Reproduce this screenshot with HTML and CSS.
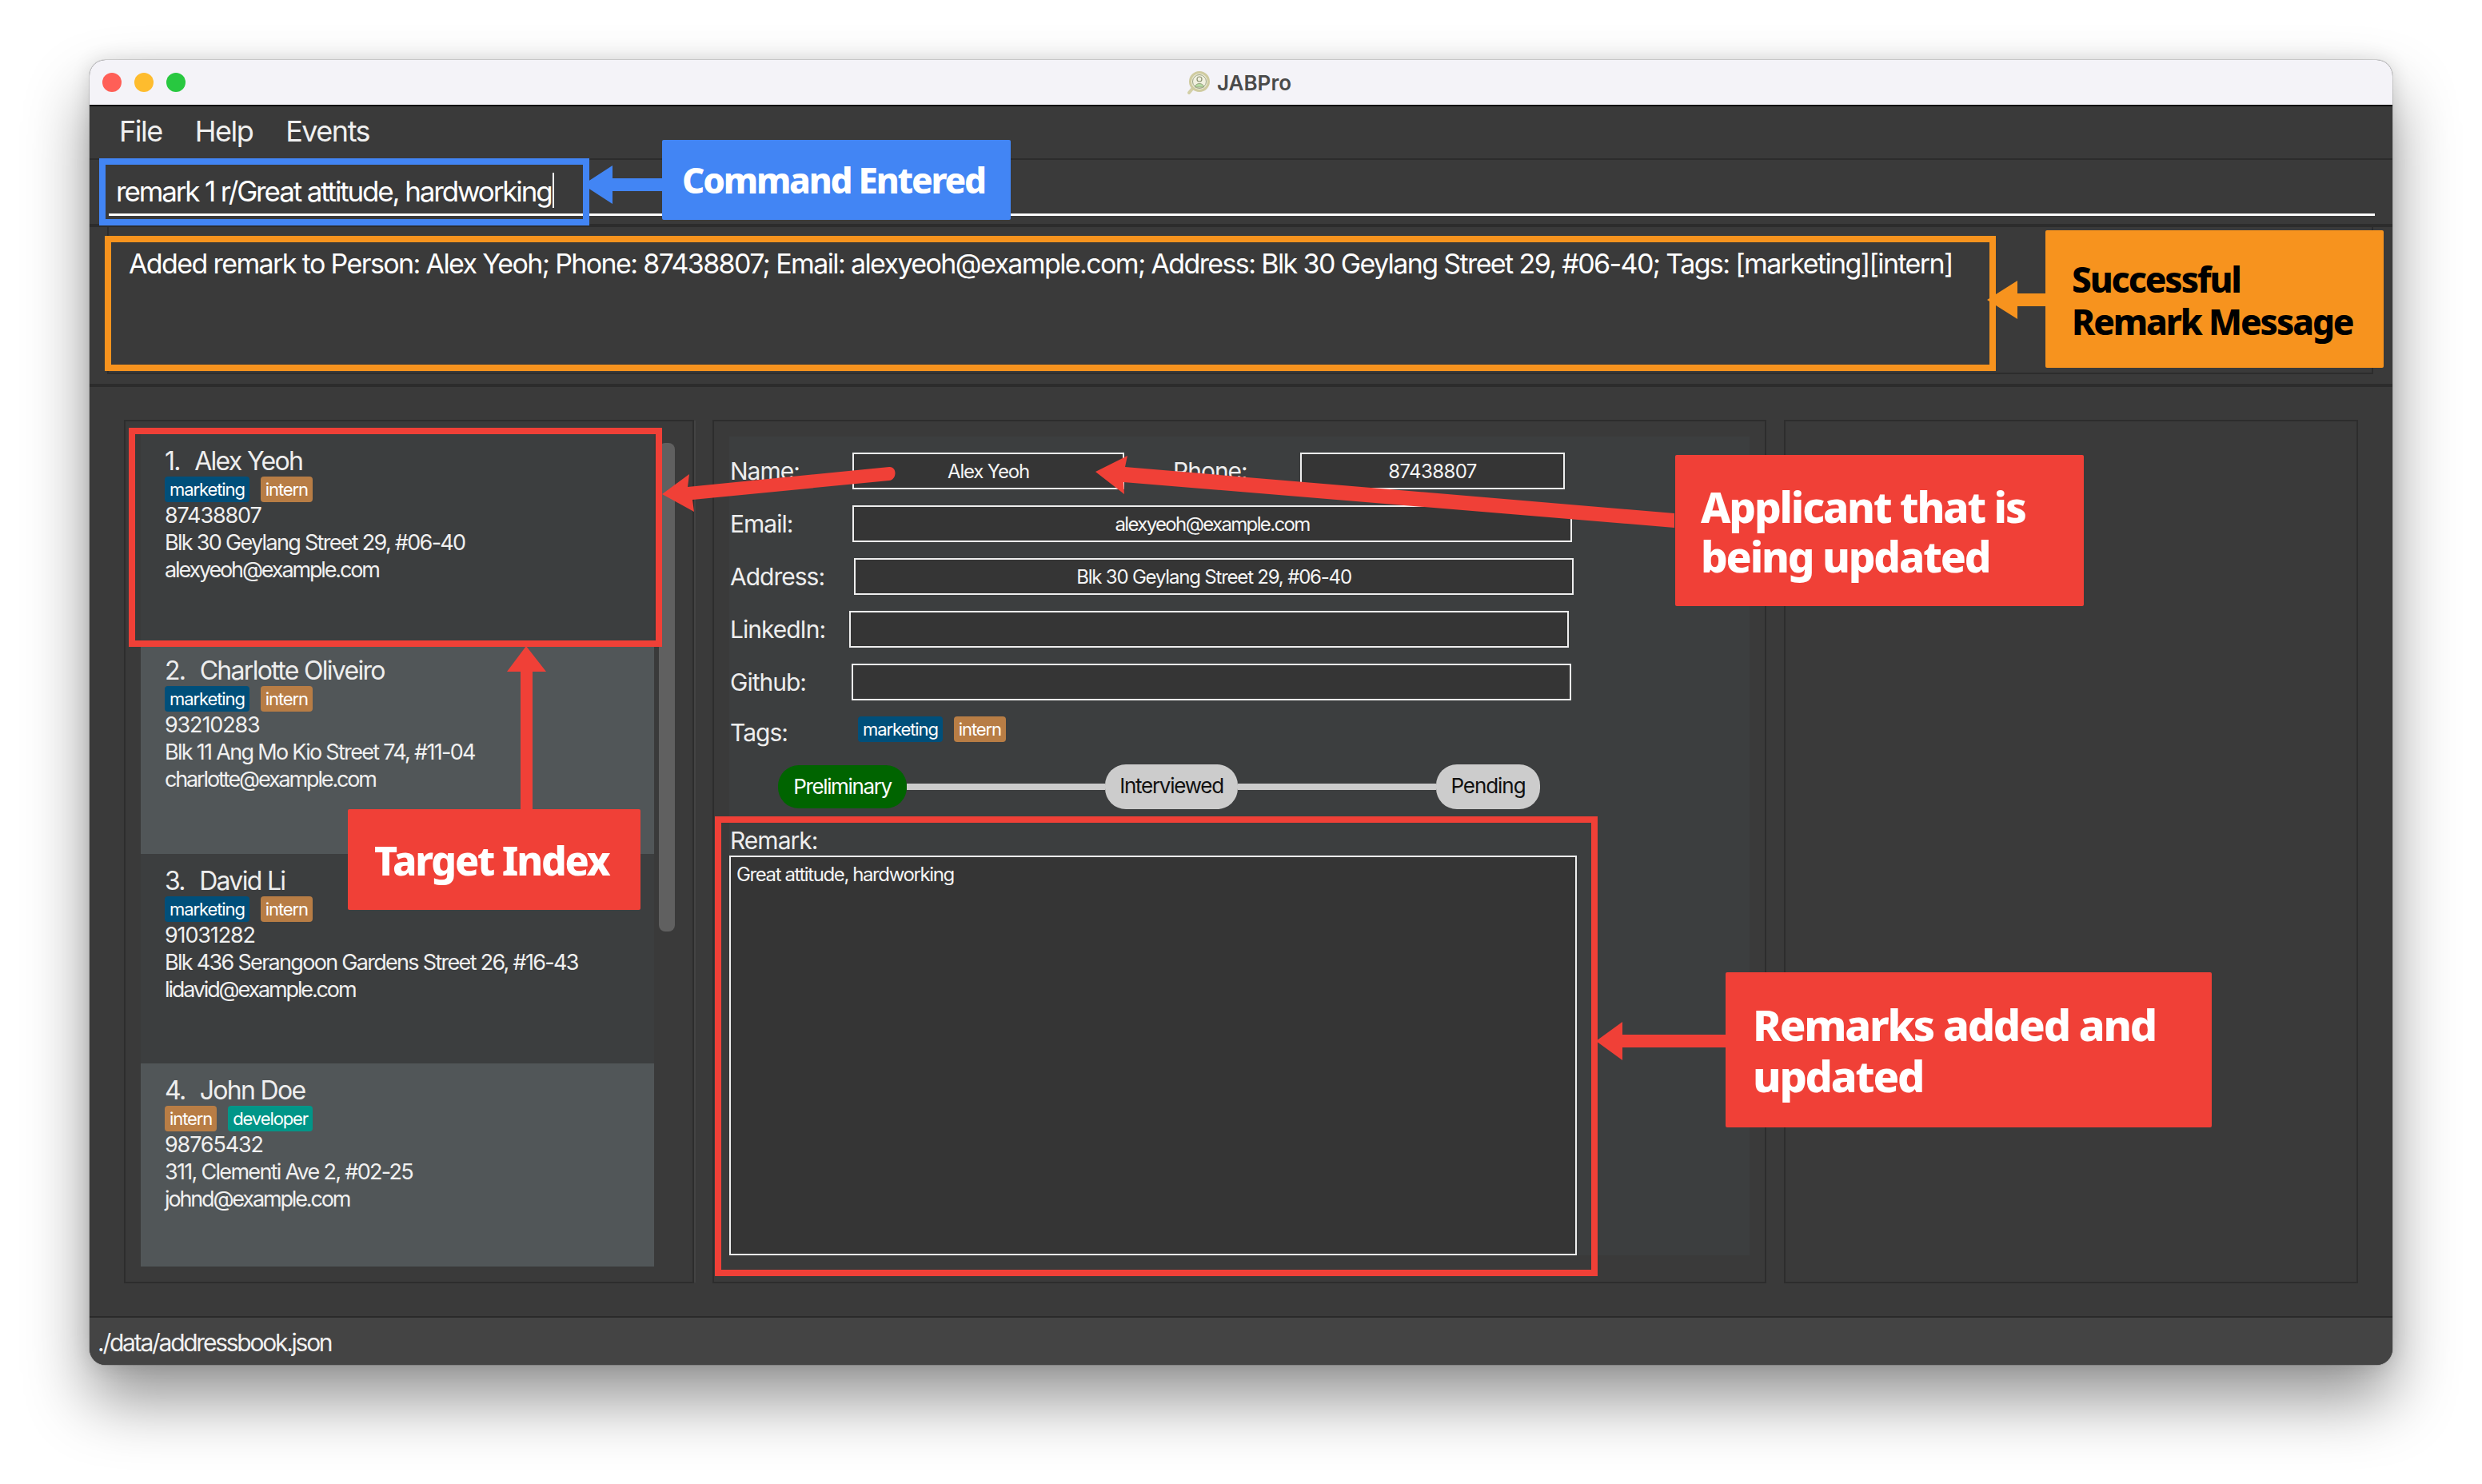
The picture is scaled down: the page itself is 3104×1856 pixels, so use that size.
FILE: index.html
```html
<!DOCTYPE html>
<html lang="en">
<head>
  <meta charset="UTF-8" />
  <title>JABPro</title>
  <link rel="stylesheet" href="styles.css">
</head>
<body>
  <div class="window">
    <div class="titlebar">
      <div class="lights">
        <span class="light red"></span>
        <span class="light yellow"></span>
        <span class="light green"></span>
      </div>
      <div class="title">
        <svg class="logo" viewBox="0 0 30 30" width="30" height="30">
          <path d="M8 21 L3 27" stroke="#d3cfa8" stroke-width="4" stroke-linecap="round"/>
          <circle cx="16" cy="13" r="11.5" fill="#f1f0df" stroke="#cfcba0" stroke-width="3"/>
          <circle cx="16" cy="13" r="8.5" fill="none" stroke="#9aa283" stroke-width="1"/>
          <circle cx="16" cy="10" r="3" fill="#f1f0df" stroke="#8b9272" stroke-width="1.2"/>
          <path d="M10.5 20 C10.5 14 21.5 14 21.5 20 Z" fill="#b6dba2" stroke="#8b9272" stroke-width=".8"/>
        </svg>
        <span>JABPro</span>
      </div>
    </div>

    <div class="menubar">
      <span class="menu-item">File</span>
      <span class="menu-item">Help</span>
      <span class="menu-item">Events</span>
    </div>

    <div class="command">
      <div class="command-input">remark 1 r/Great attitude, hardworking<span class="caret"></span></div>
    </div>

    <div class="result">
      <div class="result-box">Added remark to Person: Alex Yeoh; Phone: 87438807; Email: alexyeoh@example.com; Address: Blk 30 Geylang Street 29, #06-40; Tags: [marketing][intern]</div>
    </div>

    <div class="main">
      <div class="panel list-panel">
        <div class="person odd">
          <div class="person-name"><span class="person-num">1.</span> Alex Yeoh</div>
          <div class="tags"><span class="tag marketing">marketing</span><span class="tag intern">intern</span></div>
          <div class="person-line phone">87438807</div>
          <div class="person-line">Blk 30 Geylang Street 29, #06-40</div>
          <div class="person-line email">alexyeoh@example.com</div>
        </div>
        <div class="person even">
          <div class="person-name"><span class="person-num">2.</span> Charlotte Oliveiro</div>
          <div class="tags"><span class="tag marketing">marketing</span><span class="tag intern">intern</span></div>
          <div class="person-line phone">93210283</div>
          <div class="person-line">Blk 11 Ang Mo Kio Street 74, #11-04</div>
          <div class="person-line email">charlotte@example.com</div>
        </div>
        <div class="person odd">
          <div class="person-name"><span class="person-num">3.</span> David Li</div>
          <div class="tags"><span class="tag marketing">marketing</span><span class="tag intern">intern</span></div>
          <div class="person-line phone">91031282</div>
          <div class="person-line">Blk 436 Serangoon Gardens Street 26, #16-43</div>
          <div class="person-line email">lidavid@example.com</div>
        </div>
        <div class="person even last">
          <div class="person-name"><span class="person-num">4.</span> John Doe</div>
          <div class="tags"><span class="tag intern">intern</span><span class="tag developer">developer</span></div>
          <div class="person-line phone">98765432</div>
          <div class="person-line">311, Clementi Ave 2, #02-25</div>
          <div class="person-line email">johnd@example.com</div>
        </div>
        <div class="scrollbar"></div>
      </div>

      <div class="panel detail-panel">
        <div class="detail">
          <div class="field-row">
            <label class="field-label w-name">Name:</label>
            <div class="field name-box">Alex Yeoh</div>
            <label class="field-label phone-label">Phone:</label>
            <div class="field phone-box">87438807</div>
          </div>
          <div class="field-row">
            <label class="field-label w-name">Email:</label>
            <div class="field wide-box email-value">alexyeoh@example.com</div>
          </div>
          <div class="field-row">
            <label class="field-label w-address">Address:</label>
            <div class="field wide-box">Blk 30 Geylang Street 29, #06-40</div>
          </div>
          <div class="field-row">
            <label class="field-label w-linkedin">LinkedIn:</label>
            <div class="field wide-box"></div>
          </div>
          <div class="field-row">
            <label class="field-label w-github">Github:</label>
            <div class="field wide-box"></div>
          </div>
          <div class="tag-row">
            <label class="field-label w-tags">Tags:</label>
            <div class="tags detail-tags"><span class="tag marketing">marketing</span><span class="tag intern">intern</span></div>
          </div>
          <div class="stages">
            <span class="stage current s1">Preliminary</span>
            <span class="stage-line"></span>
            <span class="stage s2">Interviewed</span>
            <span class="stage-line"></span>
            <span class="stage s3">Pending</span>
          </div>
          <label class="field-label remark-label">Remark:</label>
          <div class="remark-box">Great attitude, hardworking</div>
        </div>
      </div>

      <div class="panel right-panel"></div>
    </div>

    <div class="statusbar">./data/addressbook.json</div>
  </div>

  <!-- annotations drawn on top of the screenshot -->
  <svg class="arrows" viewBox="0 0 3104 1856" width="3104" height="1856">
    <g fill="#4285f4"><path d="M729 231 L766 207 L766 223 L828 223 L828 239 L766 239 L766 255 Z"/></g>
    <g fill="#f7931e"><path d="M2485 375 L2523 351 L2523 367 L2558 367 L2558 383 L2523 383 L2523 399 Z"/></g>
    <g fill="#f04037">
      <path d="M658 808 L683 840 L666 840 L666 1012 L651 1012 L651 840 L634 840 Z"/>
      <path d="M1996 1302 L2029 1278 L2029 1294 L2158 1294 L2158 1310 L2029 1310 L2029 1326 Z"/>
      <path d="M1370 590 L1410 570 L1407 584 L2094 642 L2094 660 L1405 603 L1406 618 Z"/>
      <path d="M828 618 L862 593 L860 609 L1112 584 C1122 583 1122 600 1112 601 L866 625 L868 640 Z"/>
    </g>
  </svg>
  <div class="frame blue-frame"></div>
  <div class="frame orange-frame"></div>
  <div class="frame red-frame person-frame"></div>
  <div class="frame red-frame remark-frame"></div>
  <div class="note note-blue">Command Entered</div>
  <div class="note note-orange">Successful<br>Remark Message</div>
  <div class="note note-red note-target">Target Index</div>
  <div class="note note-red note-applicant">Applicant that is<br>being updated</div>
  <div class="note note-red note-remarks">Remarks added and<br>updated</div>
</body>
</html>
```

FILE: styles.css
```css
* {
  box-sizing: border-box;
}
html, body {
  margin: 0;
  height: 100%;
}
body {
  width: 3104px;
  height: 1856px;
  padding: 75px 112px 149px 112px;
  background: #fff;
  font-family: Inter, "Noto Sans", sans-serif;
  color: #f0f0f0;
  overflow: hidden;
  position: relative;
}

/* window */
.window {
  height: 1632px;
  display: flex;
  flex-direction: column;
  border-radius: 20px;
  overflow: hidden;
  background: #3a3a3a;
  box-shadow: 0 44px 80px rgba(0, 0, 0, .42), 0 0 24px rgba(0, 0, 0, .12), 0 0 0 1px rgba(0, 0, 0, .12);
}
.titlebar {
  height: 58px;
  flex: none;
  display: flex;
  align-items: center;
  background: #f4f3f8;
  border-bottom: 2px solid #111;
  position: relative;
}
.lights {
  display: flex;
  gap: 16px;
  padding-left: 16px;
}
.light {
  width: 24px;
  height: 24px;
  border-radius: 50%;
}
.red { background: #ff5f57; }
.yellow { background: #febc2e; }
.green { background: #28c840; }
.title {
  position: absolute;
  left: 1372px;
  top: 13px;
  display: flex;
  align-items: center;
  gap: 8px;
  color: #4a4a4a;
  font-size: 26px;
  font-weight: 600;
}
.logo {
  display: block;
}

.menubar {
  height: 67px;
  flex: none;
  display: flex;
  align-items: center;
  padding: 0 0 4px 37px;
  gap: 41px;
  border-bottom: 2px solid #2c2c2c;
  font-size: 36px;
  letter-spacing: -1.5px;
}

.command {
  height: 84px;
  flex: none;
  padding: 0 22px 0 24px;
  border-bottom: 4px solid #2c2c2c;
}
.command-input {
  height: 70px;
  padding: 16px 0 0 9px;
  border-bottom: 3px solid #fff;
  font-size: 35px;
  line-height: 40px;
  letter-spacing: -2.15px;
  color: #fff;
}
.caret {
  display: inline-block;
  width: 2px;
  height: 44px;
  margin-left: 1px;
  vertical-align: -8px;
  background: #fff;
}

.result {
  height: 200px;
  flex: none;
  padding: 0 24px 12px 22px;
  border-bottom: 4px solid #2c2c2c;
}
.result-box {
  height: 184px;
  padding: 26px 0 0 25px;
  border-bottom: 2px solid #2d2d2d;
  border-right: 2px solid #2d2d2d;
  border-left: 2px solid #2d2d2d;
  font-size: 34px;
  line-height: 40px;
  letter-spacing: -1.62px;
  color: #fff;
  white-space: nowrap;
}

.main {
  flex: 1;
  display: flex;
  padding: 41px 43px 41px 43px;
  min-height: 0;
}
.panel {
  border: 2px solid #2d2d2d;
  height: 1080px;
}
.list-panel {
  width: 713px;
  padding: 16px 0 0 19px;
  position: relative;
  overflow: hidden;
  margin-right: 23px;
  box-shadow: 3px 0 0 -1px #444;
}
.person {
  width: 642px;
  height: 262.3px;
  padding: 15px 0 0 30px;
}
.person.last {
  height: 254px;
}
.odd { background: #3c3e3f; }
.even { background: #515658; }
.person-name {
  font-size: 32px;
  line-height: 38px;
  letter-spacing: -1.7px;
  color: #eee;
}
.person-num {
  margin-right: 11px;
}
.tags {
  display: flex;
  gap: 14px;
}
.tag {
  height: 32px;
  padding: 0 6px;
  border-radius: 4px;
  font-size: 22px;
  line-height: 32px;
  letter-spacing: -1.1px;
  color: #fff;
}
.marketing { background: #004f7a; }
.intern { background: #b87d45; }
.developer { background: #009688; }
.person-line {
  font-size: 27px;
  line-height: 34px;
  letter-spacing: -1.7px;
  color: #f0f0f0;
}
.person-line.phone {
  letter-spacing: -1.15px;
}
.person-line.email {
  letter-spacing: -2.15px;
}
.scrollbar {
  position: absolute;
  left: 667px;
  top: 27px;
  width: 20px;
  height: 611px;
  border-radius: 8px;
  background: #606060;
}

.detail-panel {
  width: 1318px;
  padding: 19px 19px 0 19px;
  margin-right: 22px;
}
.detail {
  height: 1024px;
  padding: 20px 0 0 1px;
  background: #3c3e3f;
}
.field-row {
  height: 46px;
  margin-bottom: 20px;
  display: flex;
  align-items: center;
}
.field-label {
  font-size: 30px;
  letter-spacing: -1px;
  color: #eee;
}
.w-name { width: 153px; }
.w-address { width: 155px; }
.w-linkedin { width: 149px; }
.w-github { width: 152px; }
.w-tags { width: 160px; }
.phone-label {
  width: 159px;
  margin-left: 61px;
}
.field {
  height: 46px;
  border: 2px solid #eee;
  background: #353535;
  font-size: 24px;
  line-height: 44px;
  letter-spacing: -1.2px;
  text-align: center;
  color: #f4f4f4;
}
.name-box { width: 340px; letter-spacing: -1.2px; }
.phone-box { width: 331px; letter-spacing: -.6px; }
.wide-box { width: 900px; }
.email-value { letter-spacing: -1.65px; }
.tag-row {
  height: 44px;
  display: flex;
  align-items: center;
}
.w-tags {
  margin-top: -4px;
}
.detail-tags {
  margin-top: -12px;
}
.stages {
  display: flex;
  align-items: center;
  padding-left: 60px;
  margin-top: 16px;
  height: 56px;
}
.stage {
  height: 56px;
  line-height: 54px;
  border-radius: 26px;
  background: #ccc;
  color: #111;
  font-size: 26px;
  letter-spacing: -1.25px;
  text-align: center;
}
.stage.current {
  background: #006400;
  color: #fff;
  height: 54px;
  letter-spacing: -1.35px;
}
.s1 { width: 161px; }
.s2 { width: 166px; }
.s3 { width: 130px; letter-spacing: -1.05px; }
.stage-line {
  flex: none;
  width: 248px;
  height: 8px;
  background: #ccc;
}
.remark-label {
  display: block;
  margin-top: 19px;
  line-height: 40px;
}
.remark-box {
  width: 1060px;
  height: 500px;
  margin: -1px 0 0 -1px;
  padding: 7px 7px;
  border: 2px solid #eee;
  background: #353535;
  font-size: 24px;
  line-height: 30px;
  letter-spacing: -1.4px;
  color: #f4f4f4;
}
.right-panel {
  width: 718px;
}

.statusbar {
  height: 61px;
  flex: none;
  padding: 0 0 0 10px;
  background: #444;
  border-top: 2px solid #2a2a2a;
  font-size: 30px;
  line-height: 62px;
  letter-spacing: -2.25px;
  color: #f0f0f0;
}

/* annotations */
.arrows {
  position: absolute;
  left: 0;
  top: 0;
}
.frame {
  position: absolute;
  border: 8px solid;
}
.blue-frame {
  left: 124px;
  top: 198px;
  width: 613px;
  height: 84px;
  border-color: #4285f4;
}
.orange-frame {
  left: 131px;
  top: 295px;
  width: 2365px;
  height: 169px;
  border-color: #f7931e;
}
.red-frame {
  border-color: #f04037;
}
.person-frame {
  left: 161px;
  top: 535px;
  width: 667px;
  height: 274px;
}
.remark-frame {
  left: 894px;
  top: 1021px;
  width: 1104px;
  height: 575px;
}
.note {
  position: absolute;
  font-family: "Noto Sans", sans-serif;
  font-weight: 800;
  border-radius: 2px;
  color: #fff;
  white-space: nowrap;
}
.note-blue {
  left: 828px;
  top: 175px;
  width: 436px;
  height: 100px;
  padding: 19px 0 0 25px;
  background: #4285f4;
  font-size: 44px;
  line-height: 62px;
  letter-spacing: -2.2px;
}
.note-orange {
  left: 2558px;
  top: 288px;
  width: 423px;
  height: 172px;
  padding: 35px 0 0 33px;
  background: #f7931e;
  color: #000;
  font-size: 44px;
  line-height: 53px;
  letter-spacing: -2.1px;
}
.note-red {
  background: #f04037;
}
.note-target {
  left: 435px;
  top: 1012px;
  width: 366px;
  height: 126px;
  padding: 31px 0 0 33px;
  font-size: 50px;
  line-height: 66px;
  letter-spacing: -2.25px;
}
.note-applicant {
  left: 2095px;
  top: 569px;
  width: 511px;
  height: 189px;
  padding: 34px 0 0 32px;
  font-size: 53px;
  line-height: 62px;
  letter-spacing: -2.15px;
}
.note-remarks {
  left: 2158px;
  top: 1216px;
  width: 608px;
  height: 194px;
  padding: 33px 0 0 34px;
  font-size: 54px;
  line-height: 64px;
  letter-spacing: -2.2px;
}
```
